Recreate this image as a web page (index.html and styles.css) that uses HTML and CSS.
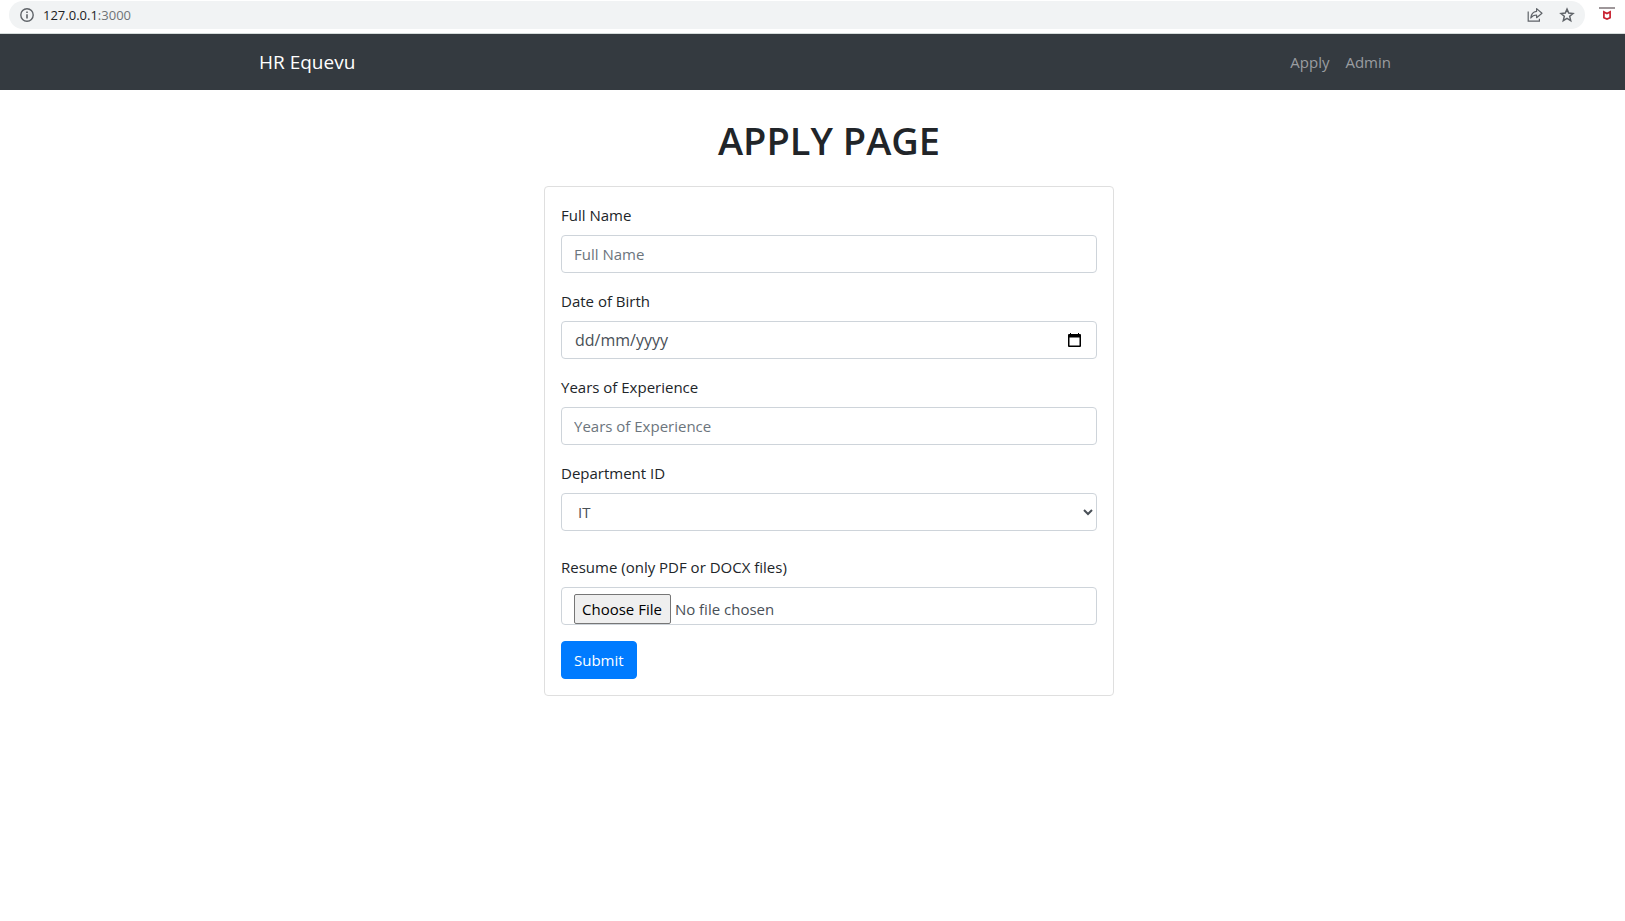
FILE: index.html
```html
<!DOCTYPE html>
<html lang="en-GB">
<head>
<meta charset="utf-8">
<meta name="viewport" content="width=device-width, initial-scale=1">
<title>HR Equevu</title>
<link rel="stylesheet" href="styles.css">
</head>
<body>
<div class="toolbar">
  <div class="address-bar">
    <svg class="icon-info" width="16" height="16" viewBox="0 0 16 16" aria-hidden="true">
      <circle cx="8" cy="8" r="6.2" fill="none" stroke="#5f6368" stroke-width="1.4"/>
      <path d="M7.2 7.2h1.6v4.2H7.2zM7.2 4.5h1.6v1.6H7.2z" fill="#5f6368"/>
    </svg>
    <span class="address">127.0.0.1<span class="port">:3000</span></span>
    <button class="icon-button" type="button" aria-label="Share this page">
      <svg width="16" height="16" viewBox="0 0 16 16" fill="none" stroke="#5f6368" stroke-width="1.2">
        <path d="M1.2 4.5v9.7h11.2v-2.4"/>
        <path d="M9.6 1.6 15 6.2l-5.4 4.5V8C7 8 5.200 8.900 3.800 11c.3-3.600 2.200-6.300 5.800-6.700z" stroke-linejoin="round"/>
      </svg>
    </button>
    <button class="icon-button" type="button" aria-label="Bookmark this page">
      <svg width="16" height="16" viewBox="0 0 16 16" fill="none" stroke="#5f6368" stroke-width="1.5">
        <path d="M8 2.100 9.700 6.100 14 6.500 10.700 9.300 11.700 13.600 8 11.300 4.300 13.600 5.300 9.300 2 6.500 6.300 6.100z"/>
      </svg>
    </button>
  </div>
  <button class="icon-button" type="button" aria-label="Extension">
    <svg width="16" height="16" viewBox="0 0 16 16">
      <path d="M0 0h16v2H0z" fill="#9e979a"/>
      <path d="M4.900 5v5.700L8 12.100l3.100-1.400V5L8 6.600z" fill="none" stroke="#c8202f" stroke-width="1.700"/>
    </svg>
  </button>
</div>

<nav class="navbar">
  <div class="container navbar-inner">
    <a class="brand" href="#">HR Equevu</a>
    <div class="nav-links">
      <a class="nav-link" href="#">Apply</a>
      <a class="nav-link" href="#">Admin</a>
    </div>
  </div>
</nav>

<main class="page">
  <div class="container">
    <h1 class="title">APPLY PAGE</h1>
    <form class="card">
      <div class="field">
        <label for="full-name">Full Name</label>
        <input class="control" id="full-name" type="text" placeholder="Full Name">
      </div>
      <div class="field">
        <label for="birth-date">Date of Birth</label>
        <div class="control date-control">
          <input class="date-input" id="birth-date" type="text" placeholder="dd/mm/yyyy">
          <button class="date-button" type="button" aria-label="Show date picker">
            <svg width="13" height="14" viewBox="0 0 13 14">
              <path d="M2 0h1v1h7V0h1v1h1a1 1 0 0 1 1 1v11a1 1 0 0 1-1 1H1a1 1 0 0 1-1-1V2a1 1 0 0 1 1-1h1zM1.500 4.500v8h10v-8z" fill="#000" fill-rule="evenodd"/>
            </svg>
          </button>
        </div>
      </div>
      <div class="field">
        <label for="experience">Years of Experience</label>
        <input class="control" id="experience" type="text" placeholder="Years of Experience">
      </div>
      <div class="field field-department">
        <label for="department">Department ID</label>
        <select class="control select-control" id="department">
          <option>IT</option>
        </select>
      </div>
      <div class="field">
        <label for="resume">Resume (only PDF or DOCX files)</label>
        <input class="control file-control" id="resume" type="file" accept=".pdf,.docx">
      </div>
      <button class="submit" type="submit">Submit</button>
    </form>
  </div>
</main>
</body>
</html>
```

FILE: styles.css
```css
*,
*::before,
*::after {
  box-sizing: border-box;
}

body {
  margin: 0;
  background: #fff;
  color: #212529;
  font-family: "Open Sans", "Noto Sans", sans-serif;
  font-size: 15px;
  line-height: 24px;
}

button,
input,
select {
  margin: 0;
  font: inherit;
}

a {
  text-decoration: none;
}

.toolbar {
  display: flex;
  align-items: center;
  gap: 14px;
  padding: 1px 10px 4px 9px;
  border-bottom: 1px solid #d5dcdb;
}

.address-bar {
  display: flex;
  flex: 1;
  align-items: center;
  gap: 16px;
  height: 28px;
  padding: 0 10px;
  border-radius: 14px;
  background: #f1f3f4;
}

.address {
  flex: 1;
  margin-left: -8px;
  color: #202124;
  font-size: 13px;
}

.port {
  color: #6f7377;
}

.icon-button {
  display: flex;
  padding: 0;
  border: 0;
  background: none;
}

.navbar,
.page {
  padding-left: 33px;
}

.navbar {
  background: #343a40;
}

.container {
  max-width: 1140px;
  margin: 0 auto;
}

.navbar-inner {
  display: flex;
  align-items: center;
  justify-content: space-between;
  padding: 8px 0;
}

.brand {
  color: #fff;
  font-size: 19px;
  line-height: 40px;
}

.nav-links {
  display: flex;
}

.nav-link {
  padding: 8px;
  color: #9a9da0;
}

.title {
  margin: 0;
  padding: 26px 0 22px;
  font-size: 38px;
  font-weight: 600;
  line-height: 48px;
  text-align: center;
}

.card {
  width: 50%;
  margin: 0 auto;
  padding: 16px;
  border: 1px solid #dfdfdf;
  border-radius: 4px;
}

.field {
  margin-bottom: 16px;
}

.field-department {
  margin-bottom: 24px;
}

.field label {
  display: block;
  margin-bottom: 8px;
}

.control {
  display: block;
  width: 100%;
  height: 38px;
  padding: 6px 12px;
  border: 1px solid #ced4da;
  border-radius: 4px;
  background: #fff;
  color: #495057;
}

.control::placeholder {
  color: #6c757d;
  opacity: 1;
}

.date-control {
  display: flex;
  align-items: center;
}

.date-input {
  flex: 1;
  min-width: 0;
  padding: 0 1px;
  border: 0;
  background: none;
  color: inherit;
  font-size: 16px;
}

.date-input::placeholder {
  color: #495057;
  opacity: 1;
}

.date-button {
  display: flex;
  padding: 0 3px;
  border: 0;
  background: none;
}

.select-control {
  padding: 6px 0 6px 12px;
}

.file-control {
  overflow: hidden;
}

.file-control::file-selector-button {
  height: 30px;
  margin: 0 4px 0 0;
  padding: 0 8px 0 7px;
  border: 1px solid #767676;
  border-radius: 2px;
  background: #efefef;
  color: #000;
  font: inherit;
}

.submit {
  display: block;
  padding: 6px 12px;
  border: 1px solid #007bff;
  border-radius: 4px;
  background: #007bff;
  color: #fff;
}
```
